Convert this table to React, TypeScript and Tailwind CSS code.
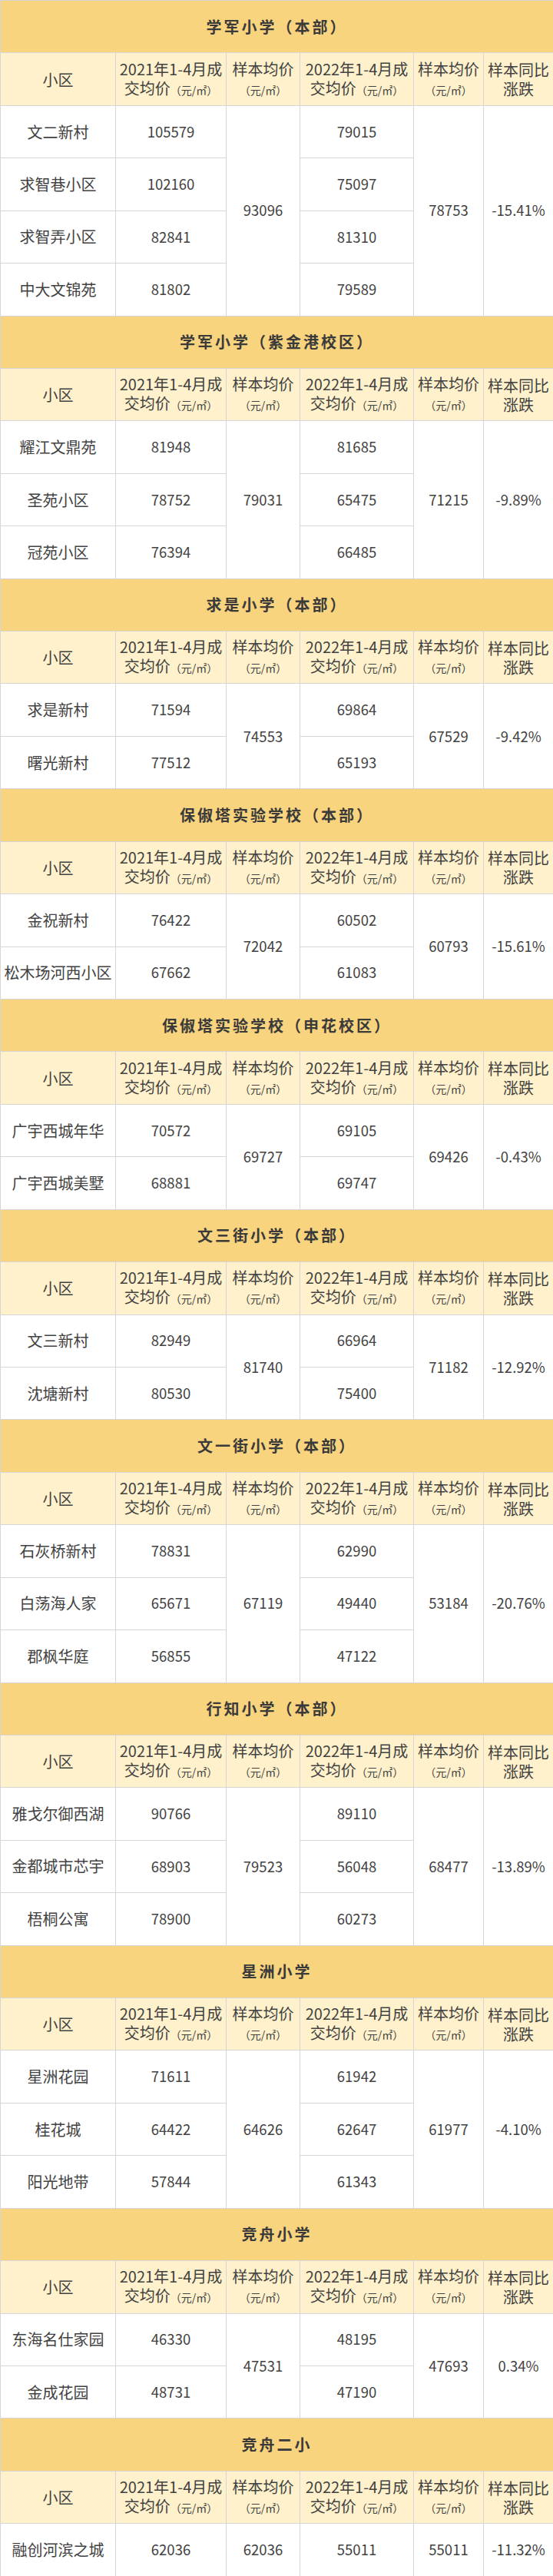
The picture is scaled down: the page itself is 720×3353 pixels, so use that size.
type Section = {
  title: string
  rows: [string, string, string][]
  avg21: string
  avg22: string
  change: string
}

const sections: Section[] = [
  {
    title: '学军小学（本部）',
    rows: [
      ['文二新村', '105579', '79015'],
      ['求智巷小区', '102160', '75097'],
      ['求智弄小区', '82841', '81310'],
      ['中大文锦苑', '81802', '79589'],
    ],
    avg21: '93096',
    avg22: '78753',
    change: '-15.41%',
  },
  {
    title: '学军小学（紫金港校区）',
    rows: [
      ['耀江文鼎苑', '81948', '81685'],
      ['圣苑小区', '78752', '65475'],
      ['冠苑小区', '76394', '66485'],
    ],
    avg21: '79031',
    avg22: '71215',
    change: '-9.89%',
  },
  {
    title: '求是小学（本部）',
    rows: [
      ['求是新村', '71594', '69864'],
      ['曙光新村', '77512', '65193'],
    ],
    avg21: '74553',
    avg22: '67529',
    change: '-9.42%',
  },
  {
    title: '保俶塔实验学校（本部）',
    rows: [
      ['金祝新村', '76422', '60502'],
      ['松木场河西小区', '67662', '61083'],
    ],
    avg21: '72042',
    avg22: '60793',
    change: '-15.61%',
  },
  {
    title: '保俶塔实验学校（申花校区）',
    rows: [
      ['广宇西城年华', '70572', '69105'],
      ['广宇西城美墅', '68881', '69747'],
    ],
    avg21: '69727',
    avg22: '69426',
    change: '-0.43%',
  },
  {
    title: '文三街小学（本部）',
    rows: [
      ['文三新村', '82949', '66964'],
      ['沈塘新村', '80530', '75400'],
    ],
    avg21: '81740',
    avg22: '71182',
    change: '-12.92%',
  },
  {
    title: '文一街小学（本部）',
    rows: [
      ['石灰桥新村', '78831', '62990'],
      ['白荡海人家', '65671', '49440'],
      ['郡枫华庭', '56855', '47122'],
    ],
    avg21: '67119',
    avg22: '53184',
    change: '-20.76%',
  },
  {
    title: '行知小学（本部）',
    rows: [
      ['雅戈尔御西湖', '90766', '89110'],
      ['金都城市芯宇', '68903', '56048'],
      ['梧桐公寓', '78900', '60273'],
    ],
    avg21: '79523',
    avg22: '68477',
    change: '-13.89%',
  },
  {
    title: '星洲小学',
    rows: [
      ['星洲花园', '71611', '61942'],
      ['桂花城', '64422', '62647'],
      ['阳光地带', '57844', '61343'],
    ],
    avg21: '64626',
    avg22: '61977',
    change: '-4.10%',
  },
  {
    title: '竞舟小学',
    rows: [
      ['东海名仕家园', '46330', '48195'],
      ['金成花园', '48731', '47190'],
    ],
    avg21: '47531',
    avg22: '47693',
    change: '0.34%',
  },
  {
    title: '竞舟二小',
    rows: [['融创河滨之城', '62036', '55011']],
    avg21: '62036',
    avg22: '55011',
    change: '-11.32%',
  },
]

const cell = 'border border-[#d6d6d6] text-center align-middle p-0'
const num = `${cell} text-[18.5px]`
const unit = <span className="text-[14px]">（元/㎡）</span>

function HeaderRow() {
  return (
    <tr className="h-[68.43px] bg-[#fef1cb] text-[20px] leading-[25px]">
      <td className={cell}>小区</td>
      <td className={cell}>
        2021年1-4月成
        <br />
        交均价{unit}
      </td>
      <td className={cell}>
        样本均价
        <br />
        {unit}
      </td>
      <td className={cell}>
        2022年1-4月成
        <br />
        交均价{unit}
      </td>
      <td className={cell}>
        样本均价
        <br />
        {unit}
      </td>
      <td className={cell}>
        样本同比
        <br />
        涨跌
      </td>
    </tr>
  )
}

function SectionRows({ s }: { s: Section }) {
  const span = s.rows.length
  return (
    <>
      <tr className="h-[68.43px] bg-[#f9d47e]">
        <td colSpan={6} className={`${cell} text-[20px] font-bold tracking-[3px] text-[#3a3a3a]`}>
          {s.title}
        </td>
      </tr>
      <HeaderRow />
      {s.rows.map((r, i) => (
        <tr key={r[0]} className="h-[68.43px] bg-white">
          <td className={`${cell} text-[20px]`}>{r[0]}</td>
          <td className={num}>{r[1]}</td>
          {i === 0 && (
            <td rowSpan={span} className={num}>
              {s.avg21}
            </td>
          )}
          <td className={num}>{r[2]}</td>
          {i === 0 && (
            <>
              <td rowSpan={span} className={num}>
                {s.avg22}
              </td>
              <td rowSpan={span} className={num}>
                {s.change}
              </td>
            </>
          )}
        </tr>
      ))}
    </>
  )
}

export default function App() {
  return (
    <div className="w-[720px] bg-white text-[#424242] font-['Noto_Sans_CJK_SC','Noto_Sans',sans-serif]">
      <table className="w-full table-fixed border-collapse">
        <colgroup>
          <col className="w-[150px]" />
          <col className="w-[144px]" />
          <col className="w-[96px]" />
          <col className="w-[148px]" />
          <col className="w-[91px]" />
          <col className="w-[91px]" />
        </colgroup>
        <tbody>
          {sections.map(s => (
            <SectionRows key={s.title} s={s} />
          ))}
        </tbody>
      </table>
    </div>
  )
}
